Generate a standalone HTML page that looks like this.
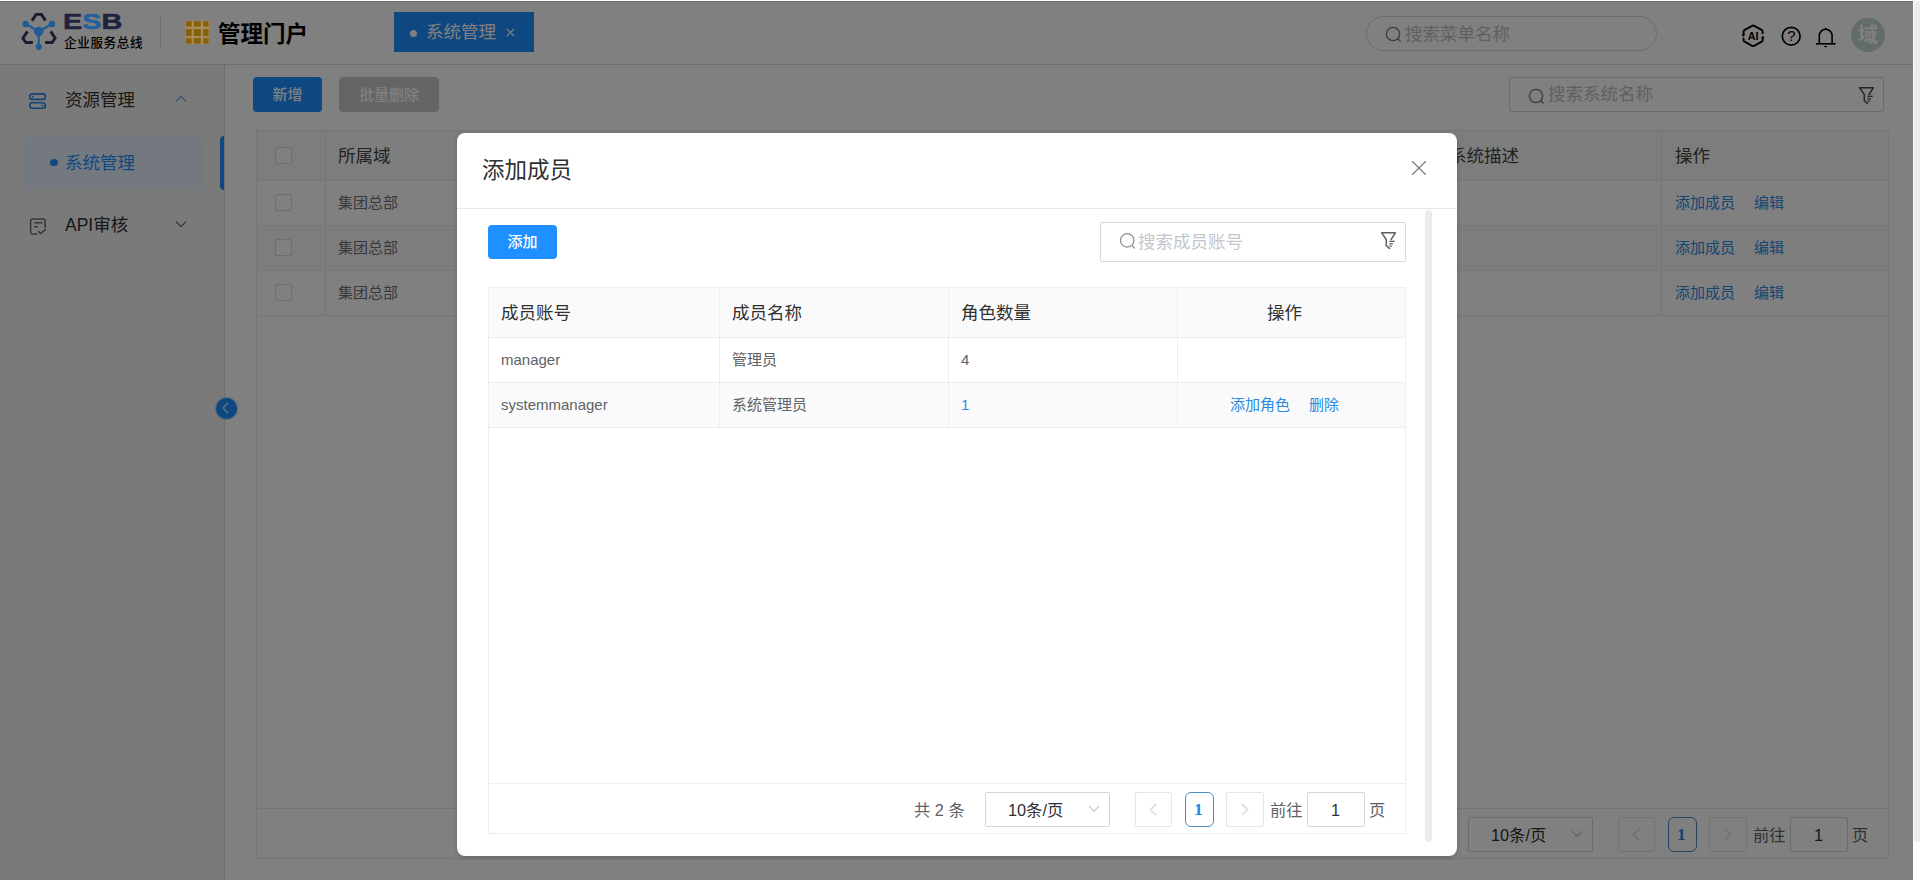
<!DOCTYPE html>
<html lang="zh-CN">
<head>
<meta charset="utf-8">
<title>管理门户 - 系统管理</title>
<style>
*{box-sizing:border-box;margin:0;padding:0}
html,body{width:1920px;height:880px;overflow:hidden;background:#fff}
body{position:relative;font-family:"Liberation Sans","Noto Sans CJK SC",sans-serif;color:#303133;font-size:15px;line-height:1}
.abs{position:absolute}
.t{position:absolute;white-space:nowrap;line-height:1}
svg{position:absolute;overflow:visible}
/* ---------- header ---------- */
#hdr{position:absolute;left:0;top:0;width:1913px;height:65px;background:#fff;border-bottom:1px solid #dcdcdc}
#esb{left:63px;top:11px;font-size:22px;font-weight:bold;color:#1e2340;transform-origin:0 0;transform:scaleX(1.31);-webkit-text-stroke:0.5px #1e2340}
#esb b{color:#235f9c;-webkit-text-stroke:0.5px #235f9c}
#esbsub{left:64px;top:36.5px;font-size:12.6px;letter-spacing:0.6px;font-weight:500;color:#000}
#portal{left:218px;top:24px;font-size:22.5px;font-weight:bold;color:#000}
#tab{position:absolute;left:394px;top:12px;width:140px;height:40px;background:#1e90ff}
#tab .dot{position:absolute;left:16px;top:18px;width:7px;height:7px;border-radius:50%;background:#fff}
#tab .t{left:32px;top:12px;font-size:17.5px;color:#fff}
#hsearch{position:absolute;left:1366px;top:16px;width:291px;height:35px;border:1px solid #d9d9d9;border-radius:18px;background:#fff}
.ph{color:#bdbfc3;font-size:17.5px}
/* ---------- sidebar ---------- */
#side{position:absolute;left:0;top:65px;width:225px;height:815px;background:#f4f4f4;border-right:1px solid #dcdcdc}
.mi{font-size:17.5px;color:#303133}
#act{position:absolute;left:21.5px;top:136px;width:181px;height:54px;border-radius:8px;background:#e8f2ff}
#actbar{position:absolute;left:220px;top:136px;width:4px;height:54px;background:#1e90ff;border-radius:4px 0 0 4px}
/* ---------- content ---------- */
.btn{position:absolute;height:35px;border-radius:4px;color:#fff;font-size:15px;font-weight:500;text-align:center;line-height:34px}
.tbl{position:absolute;border:1px solid #ececec}
.vl{position:absolute;width:1px;background:#ececec}
.hl{position:absolute;height:1px;background:#ececec}
.th{font-size:17.5px;color:#303133}
.td{font-size:15px;color:#606266}
.lk{font-size:15px;color:#2a8ae6}
.cb{position:absolute;width:17px;height:17px;border:1px solid #dcdcdc;border-radius:2px;background:#fff}
.box{position:absolute;border:1px solid #d6d6d6;border-radius:2px;background:#fff}
.pg{font-size:16.3px;color:#606266}
/* ---------- mask / modal ---------- */
#mask{position:absolute;left:0;top:1px;width:1913px;height:879px;background:rgba(0,0,0,.498);border-top:1px solid rgba(0,0,0,.12)}
#sb{position:absolute;left:1913px;top:0;width:7px;height:880px;background:#fff}
#sb i{position:absolute;left:0.5px;top:1px;width:7px;height:841px;background:#ededed;border-radius:3px}
#modal{position:absolute;left:457px;top:133px;width:1000px;height:723px;background:#fff;border-radius:8px;box-shadow:0 1px 4px rgba(0,0,0,.22)}
</style>
</head>
<body>

<!-- ================= HEADER ================= -->
<div id="hdr">
  
  <div class="t" id="esbsub">企业服务总线</div>
  <div class="abs" style="left:160px;top:16px;width:1px;height:31px;background:#dcdcdc"></div>
  
  <div class="t" id="portal">管理门户</div>

  <div id="tab">
    <span class="dot"></span>
    <div class="t">系统管理</div>
    <svg style="left:112px;top:16px" width="9" height="9" viewBox="0 0 9 9"><path d="M1 1 L8 8 M8 1 L1 8" stroke="#fff" stroke-width="1.2" fill="none"/></svg>
  </div>

  <div id="hsearch">
    <svg style="left:18px;top:9px" width="18" height="18" viewBox="0 0 18 18"><circle cx="8" cy="8" r="6.6" fill="none" stroke="#747679" stroke-width="1.3"/><path d="M12.8 12.8 L15.6 15.2" stroke="#747679" stroke-width="1.3"/></svg>
    <div class="t ph" style="left:38px;top:9px">搜索菜单名称</div>
  </div>

  <!-- AI hex icon -->
  <svg style="left:1741px;top:24px" width="24" height="24" viewBox="1741 24 24 24">
    <path d="M1762.6 33.2 V31.4 Q1762.6 30.4 1761.7 29.9 L1754.2 25.8 Q1753.2 25.3 1752.2 25.8 L1744.7 29.9 Q1743.6 30.5 1743.6 31.6 V34.2" fill="none" stroke="#000" stroke-width="1.9" stroke-linecap="round" stroke-linejoin="round"/>
    <path d="M1743.6 38.4 V40.2 Q1743.6 41.2 1744.5 41.7 L1752.2 45.9 Q1753.2 46.4 1754.2 45.9 L1761.7 41.7 Q1762.6 41.2 1762.6 40.2 V38.6" fill="none" stroke="#000" stroke-width="1.9" stroke-linecap="round" stroke-linejoin="round"/>
    <circle cx="1743.3" cy="35.1" r="1.35" fill="#000"/><circle cx="1762.8" cy="37.6" r="1.35" fill="#000"/>
    <text x="1753.2" y="39.8" text-anchor="middle" font-family="Liberation Sans, sans-serif" font-size="10.8" font-weight="bold" fill="#000">AI</text>
  </svg>
  <!-- help -->
  <svg style="left:1781px;top:26px" width="21" height="21" viewBox="1781 26 21 21">
    <circle cx="1791.2" cy="36.2" r="8.9" fill="none" stroke="#000" stroke-width="1.7"/>
    <text x="1791.3" y="41.4" text-anchor="middle" font-family="Liberation Sans, sans-serif" font-size="15.5" fill="#000">?</text>
  </svg>
  <!-- bell -->
  <svg style="left:1815px;top:26px" width="22" height="22" viewBox="1815 26 22 22">
    <path d="M1819.3 43.6 V35.6 A6.4 6.4 0 0 1 1832.1 35.6 V43.6" fill="none" stroke="#000" stroke-width="1.6"/>
    <path d="M1816 43.8 H1835.6" stroke="#000" stroke-width="1.6"/>
    <path d="M1824.3 46.5 H1827" stroke="#000" stroke-width="1.2"/>
    <path d="M1824.2 29.4 L1825.7 27.5 L1827.2 29.4 Z" fill="#000"/>
  </svg>
  <!-- avatar -->
  <div class="abs" style="left:1851px;top:18px;width:34px;height:34px;border-radius:50%;background:#c4d8d6"></div>
  <div class="t" style="left:1858px;top:25px;font-size:20px;font-weight:bold;color:#fff">域</div>
</div>

<!-- ================= SIDEBAR ================= -->
<div id="side"></div>
<div id="act"></div>
<div id="actbar"></div>
<!-- 资源管理 icon -->
<svg style="left:28px;top:92px" width="20" height="19" viewBox="28 92 20 19">
  <rect x="29.7" y="93.9" width="15.7" height="5.5" rx="2.75" fill="none" stroke="#2b86ea" stroke-width="1.6"/>
  <rect x="29.7" y="102.8" width="15.7" height="5.5" rx="2.75" fill="none" stroke="#2b86ea" stroke-width="1.6"/>
  <circle cx="32.8" cy="96.7" r="0.9" fill="#2b86ea"/><circle cx="42.4" cy="105.6" r="0.9" fill="#2b86ea"/>
</svg>
<div class="t mi" style="left:65px;top:92px">资源管理</div>
<svg style="left:174.5px;top:94.6px" width="12" height="8" viewBox="0 0 12 8"><path d="M0.8 6.6 L6 1.4 L11.2 6.6" fill="none" stroke="#5a9be6" stroke-width="1.1"/></svg>
<div class="abs" style="left:50px;top:158.8px;width:7.6px;height:7.6px;border-radius:50%;background:#1e90ff"></div>
<div class="t mi" style="left:65px;top:155px;color:#1e90ff">系统管理</div>
<!-- API审核 icon -->
<svg style="left:28px;top:216px" width="20" height="21" viewBox="28 216 20 21">
  <path d="M45.1 227.6 V221 A2 2 0 0 0 43.1 219 H32.6 A2 2 0 0 0 30.6 221 V232 A2 2 0 0 0 32.6 234 H36.8" fill="none" stroke="#6a6c70" stroke-width="1.5" stroke-linecap="round"/>
  <path d="M34.2 222.8 H42.6 M34.2 226.8 H37.8" stroke="#6a6c70" stroke-width="1.5"/>
  <path d="M38.6 231.6 L40.6 233.8 L45.2 229.6" fill="none" stroke="#6a6c70" stroke-width="1.5" stroke-linecap="round" stroke-linejoin="round"/>
</svg>
<div class="t mi" style="left:65px;top:217px">API审核</div>
<svg style="left:174.7px;top:219.6px" width="12" height="8" viewBox="0 0 12 8"><path d="M0.8 1.4 L6 6.6 L11.2 1.4" fill="none" stroke="#606266" stroke-width="1.1"/></svg>

<!-- collapse toggle -->
<div class="abs" style="left:215px;top:396.5px;width:23.4px;height:23px;border-radius:50%;background:#1e90ff;border:1px solid #b9d9fb"></div>
<svg style="left:221px;top:402px" width="9" height="12" viewBox="0 0 9 12"><path d="M7 1 L2 6 L7 11" fill="none" stroke="#cfe6ff" stroke-width="1.3"/></svg>

<!-- ================= CONTENT ================= -->
<div class="btn" style="left:253px;top:77px;width:69px;line-height:36px;background:#1e90ff">新增</div>
<div class="btn" style="left:339px;top:77px;width:100px;line-height:36px;background:#c8c9cc">批量删除</div>

<div class="box" style="left:1509px;top:77px;width:375px;height:35px">
  <svg style="left:18px;top:9px" width="18" height="18" viewBox="0 0 18 18"><circle cx="8" cy="9" r="6.6" fill="none" stroke="#747679" stroke-width="1.3"/><path d="M12.8 13.8 L15.6 16.2" stroke="#747679" stroke-width="1.3"/></svg>
  <div class="t ph" style="left:38px;top:8px">搜索系统名称</div>
  <svg class="flt" style="left:348px;top:8px" width="18" height="20" viewBox="1858 86 18 20">
    <path d="M1869 94.7 L1873.3 87.8 H1859.7 L1864.3 94.6 V100.8 L1867.4 103.4" fill="none" stroke="#4a4a4a" stroke-width="1.5" stroke-linejoin="round" stroke-linecap="round"/>
    <path d="M1867.4 96.4 H1872.7 M1867.4 98.8 H1871 M1867.4 101.2 H1869.8" stroke="#4a4a4a" stroke-width="1.2"/>
  </svg>
</div>

<!-- background table -->
<div class="tbl" style="left:256px;top:130px;width:1633px;height:679px;background:#fff"></div>
<div class="abs" style="left:257px;top:131px;width:1631px;height:49px;background:#fafafa"></div>
<div class="abs" style="left:257px;top:226px;width:1631px;height:44px;background:#fafafa"></div>
<div class="hl" style="left:257px;top:180px;width:1631px"></div>
<div class="hl" style="left:257px;top:225px;width:1631px"></div>
<div class="hl" style="left:257px;top:270px;width:1631px"></div>
<div class="hl" style="left:257px;top:315px;width:1631px"></div>
<div class="vl" style="left:325px;top:131px;height:185px"></div>
<div class="vl" style="left:1661px;top:131px;height:185px"></div>
<div class="cb" style="left:275px;top:147px"></div>
<div class="cb" style="left:275px;top:194px"></div>
<div class="cb" style="left:275px;top:239px"></div>
<div class="cb" style="left:275px;top:284px"></div>
<div class="t th" style="left:338px;top:148px;color:#444">所属域</div>
<div class="t td" style="left:338px;top:195px;color:#707276">集团总部</div>
<div class="t td" style="left:338px;top:240px;color:#707276">集团总部</div>
<div class="t td" style="left:338px;top:285px;color:#707276">集团总部</div>
<div class="t th" style="left:1449px;top:148px;color:#444">系统描述</div>
<div class="t th" style="left:1675px;top:148px;color:#444">操作</div>
<div class="t lk" style="left:1675px;top:195px">添加成员</div><div class="t lk" style="left:1754px;top:195px">编辑</div>
<div class="t lk" style="left:1675px;top:240px">添加成员</div><div class="t lk" style="left:1754px;top:240px">编辑</div>
<div class="t lk" style="left:1675px;top:285px">添加成员</div><div class="t lk" style="left:1754px;top:285px">编辑</div>

<!-- background pagination -->
<div class="tbl" style="left:256px;top:808px;width:1633px;height:51px;background:#fff"></div>
<div class="t pg" style="left:1397px;top:827px">共 3 条</div>
<div class="box" style="left:1468px;top:817px;width:125px;height:35px"></div>
<div class="t pg" style="left:1491px;top:827px;color:#303133">10条/页</div>
<svg style="left:1571px;top:830px" width="12" height="8" viewBox="0 0 12 8"><path d="M1 1.2 L6 6.2 L11 1.2" fill="none" stroke="#c0c4cc" stroke-width="1.2"/></svg>
<div class="box" style="left:1618px;top:817px;width:37px;height:35px;border-color:#e6e6e6"></div>
<svg style="left:1632px;top:828px" width="8" height="13" viewBox="0 0 8 13"><path d="M7.2 1 L1.4 6.6 L7.2 12.2" fill="none" stroke="#dee1e7" stroke-width="1.8"/></svg>
<div class="box" style="left:1668px;top:817px;width:29px;height:35px;border-color:#4a8cc6;border-radius:6px"></div>
<div class="t" style="left:1677px;top:825.5px;font-family:'Liberation Serif',serif;font-weight:bold;font-size:17.5px;color:#2a86dc">1</div>
<div class="box" style="left:1709px;top:817px;width:38px;height:35px;border-color:#e6e6e6"></div>
<svg style="left:1724px;top:828px" width="8" height="13" viewBox="0 0 8 13"><path d="M0.8 1 L6.6 6.6 L0.8 12.2" fill="none" stroke="#dee1e7" stroke-width="1.8"/></svg>
<div class="t pg" style="left:1753px;top:827px">前往</div>
<div class="box" style="left:1790px;top:817px;width:58px;height:35px"></div>
<div class="t pg" style="left:1814px;top:827px;color:#303133">1</div>
<div class="t pg" style="left:1852px;top:827px">页</div>

<!-- ================= MASK ================= -->
<div id="mask"></div>
<div id="sb"><i></i></div>

<!-- above-mask decorative icons (direct colours) -->
<svg id="logo" style="left:20px;top:11px" width="38" height="40" viewBox="20 11 38 40">
  <g fill="none" stroke="#1a1d30" stroke-width="2.9" stroke-linejoin="miter">
    <path d="M32.0 20.6 L36.1 14.4 L41.5 14.4 L45.5 20.6"/>
    <path d="M27.5 31.4 L22.9 38.3 L25.9 42.5 L32.8 42.5"/>
    <path d="M50.7 31.4 L55.1 38.3 L52.1 42.5 L45.2 42.5"/>
  </g>
  <g stroke="#1f5b96" stroke-width="2.2" fill="none">
    <path d="M38.75 31.5 L25.8 24 M38.75 31.5 L51.7 24 M38.75 31.5 L38.75 46.5"/>
  </g>
  <g fill="#1f5b96">
    <circle cx="38.75" cy="31.5" r="4.7"/>
    <circle cx="25.6" cy="24" r="3.2"/>
    <circle cx="51.9" cy="24" r="3.2"/>
    <circle cx="38.75" cy="46.8" r="3.1"/>
  </g>
</svg>
<svg style="left:185px;top:20px" width="25" height="25" viewBox="185 20 25 25">
  <rect x="185.6" y="20.8" width="23.4" height="23.2" fill="#a88c5c"/>
  <g fill="#87600a">
    <rect x="186" y="21.2" width="5.7" height="5.4"/><rect x="193.8" y="21.2" width="7" height="5.4"/><rect x="203.1" y="21.2" width="5.5" height="5.4"/>
    <rect x="186" y="29.1" width="5.7" height="7"/><rect x="193.8" y="29.1" width="7" height="7"/><rect x="203.1" y="29.1" width="5.5" height="7"/>
    <rect x="186" y="38.1" width="5.7" height="5.5"/><rect x="193.8" y="38.1" width="7" height="5.5"/><rect x="203.1" y="38.1" width="5.5" height="5.5"/>
  </g>
</svg>

<div class="t" id="esb">E<b>S</b>B</div>

<!-- ================= MODAL ================= -->
<div id="modal">
  <div class="t" style="left:25px;top:27px;font-size:22.5px;color:#303133">添加成员</div>
  <svg style="left:954px;top:27px" width="16" height="16" viewBox="0 0 16 16"><path d="M1.2 1.2 L14.8 14.8 M14.8 1.2 L1.2 14.8" stroke="#7a7d82" stroke-width="1.3" fill="none"/></svg>
  <div class="hl" style="left:0;top:75px;width:1000px;background:#e8e8e8"></div>
  <!-- inner scrollbar -->
  <div class="abs" style="left:968px;top:77px;width:7px;height:632px;border-radius:3.5px;background:#ececec"></div>

  <div class="btn" style="left:31px;top:92px;width:69px;height:34px;line-height:33px;background:#1e90ff">添加</div>

  <div class="box" style="left:643px;top:89px;width:306px;height:40px;border-color:#d9d9d9">
    <svg style="left:17px;top:9px" width="20" height="20" viewBox="1118 232 20 20"><circle cx="1127.2" cy="240.4" r="6.7" fill="none" stroke="#8c8c8c" stroke-width="1.2"/><path d="M1131.9 245.3 L1134.7 248.5" stroke="#8c8c8c" stroke-width="1.2"/></svg>
    <div class="t ph" style="left:37px;top:11px;color:#c3c6cd">搜索成员账号</div>
    <svg style="left:279px;top:7px" width="18" height="20" viewBox="1380 230 18 20">
      <path d="M1391 239.7 L1395.3 232.8 H1381.7 L1386.3 239.6 V245.8 L1389.4 248.4" fill="none" stroke="#5f5f5f" stroke-width="1.5" stroke-linejoin="round" stroke-linecap="round"/>
      <path d="M1389.4 241.4 H1394.7 M1389.4 243.8 H1393 M1389.4 246.2 H1391.8" stroke="#5f5f5f" stroke-width="1.2"/>
    </svg>
  </div>

  <!-- member table -->
  <div class="tbl" style="left:31px;top:154px;width:918px;height:497px;border-color:#ebeef5"></div>
  <div class="abs" style="left:32px;top:155px;width:916px;height:49px;background:#fafafa"></div>
  <div class="abs" style="left:32px;top:250px;width:916px;height:44px;background:#fafafa"></div>
  <div class="hl" style="left:32px;top:204px;width:916px;background:#ebeef5"></div>
  <div class="hl" style="left:32px;top:249px;width:916px;background:#ebeef5"></div>
  <div class="hl" style="left:32px;top:294px;width:916px;background:#ebeef5"></div>
  <div class="vl" style="left:262px;top:155px;height:140px;background:#ebeef5"></div>
  <div class="vl" style="left:491px;top:155px;height:140px;background:#ebeef5"></div>
  <div class="vl" style="left:720px;top:155px;height:140px;background:#ebeef5"></div>
  <div class="t th" style="left:44px;top:172px">成员账号</div>
  <div class="t th" style="left:275px;top:172px">成员名称</div>
  <div class="t th" style="left:504px;top:172px">角色数量</div>
  <div class="t th" style="left:810px;top:172px">操作</div>
  <div class="t td" style="left:44px;top:219px">manager</div>
  <div class="t td" style="left:275px;top:219px">管理员</div>
  <div class="t td" style="left:504px;top:219px">4</div>
  <div class="t td" style="left:44px;top:264px">systemmanager</div>
  <div class="t td" style="left:275px;top:264px">系统管理员</div>
  <div class="t lk" style="left:504px;top:264px">1</div>
  <div class="t lk" style="left:773px;top:264px">添加角色</div>
  <div class="t lk" style="left:852px;top:264px">删除</div>

  <!-- member pagination -->
  <div class="tbl" style="left:31px;top:650px;width:918px;height:51px;border-color:#ebeef5"></div>
  <div class="t pg" style="left:457px;top:669px">共 2 条</div>
  <div class="box" style="left:528px;top:659px;width:125px;height:35px"></div>
  <div class="t pg" style="left:551px;top:669px;color:#303133">10条/页</div>
  <svg style="left:631px;top:672px" width="12" height="8" viewBox="0 0 12 8"><path d="M1 1.2 L6 6.2 L11 1.2" fill="none" stroke="#c0c4cc" stroke-width="1.2"/></svg>
  <div class="box" style="left:678px;top:659px;width:37px;height:35px;border-color:#e6e6e6"></div>
  <svg style="left:692px;top:670px" width="8" height="13" viewBox="0 0 8 13"><path d="M7.2 1 L1.4 6.6 L7.2 12.2" fill="none" stroke="#dee1e7" stroke-width="1.8"/></svg>
  <div class="box" style="left:728px;top:659px;width:29px;height:35px;border-color:#4a8cc6;border-radius:6px"></div>
  <div class="t" style="left:737px;top:667.5px;font-family:'Liberation Serif',serif;font-weight:bold;font-size:17.5px;color:#2a86dc">1</div>
  <div class="box" style="left:769px;top:659px;width:38px;height:35px;border-color:#e6e6e6"></div>
  <svg style="left:784px;top:670px" width="8" height="13" viewBox="0 0 8 13"><path d="M0.8 1 L6.6 6.6 L0.8 12.2" fill="none" stroke="#dee1e7" stroke-width="1.8"/></svg>
  <div class="t pg" style="left:813px;top:669px">前往</div>
  <div class="box" style="left:850px;top:659px;width:58px;height:35px"></div>
  <div class="t pg" style="left:874px;top:669px;color:#303133">1</div>
  <div class="t pg" style="left:912px;top:669px">页</div>
</div>

</body>
</html>
